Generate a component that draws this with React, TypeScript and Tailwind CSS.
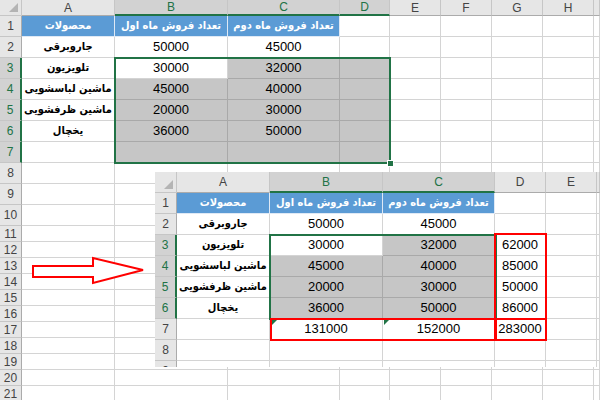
import clsx from "clsx";

type Cell = { text?: string; fa?: boolean; blue?: boolean; gray?: boolean };

const items = ["محصولات", "جاروبرقی", "تلویزیون", "ماشین لباسشویی", "ماشین ظرفشویی", "یخچال"];
const month1 = ["تعداد فروش ماه اول", "50000", "30000", "45000", "20000", "36000"];
const month2 = ["تعداد فروش ماه دوم", "45000", "32000", "40000", "30000", "50000"];
const sums = ["", "", "62000", "85000", "50000", "86000"];

const baseCell = (r: number, c: number): Cell => {
  if (r > 6 || c > 2) return {};
  const text = [items, month1, month2][c][r - 1];
  return { text, fa: c === 0 || r === 1, blue: r === 1 };
};

const topCell = (r: number, c: number): Cell => ({
  ...baseCell(r, c),
  gray: r >= 3 && r <= 7 && c >= 1 && c <= 3 && !(r === 3 && c === 1),
});

const pastedCell = (r: number, c: number): Cell => {
  if (c === 3 && r <= 6) return { text: sums[r - 1] };
  if (r === 7) return { text: ["", "131000", "152000", "283000"][c] };
  return { ...baseCell(r, c), gray: r >= 3 && r <= 6 && c >= 1 && c <= 2 && !(r === 3 && c === 1) };
};

const Corner = () => (
  <div className="relative bg-[#e6e6e6] border-r border-b border-[#c6c6c6]">
    <svg className="absolute right-[3px] bottom-[3px]" width="9" height="9" viewBox="0 0 9 9">
      <polygon points="9,0 9,9 0,9" fill="#b4b4b4" />
    </svg>
  </div>
);

const ColHead = ({ label, hi }: { label: string; hi: boolean }) => (
  <div
    className={clsx(
      "flex items-center justify-center border-r border-r-[#c6c6c6] text-[12px] font-['Liberation_Sans',Arial,sans-serif]",
      hi ? "bg-[#d2d2d2] text-[#217346] border-b-2 border-b-[#217346]" : "bg-[#e6e6e6] text-[#444] border-b border-b-[#ababab]"
    )}
  >
    {label}
  </div>
);

const RowHead = ({ n, hi }: { n: number; hi: boolean }) => (
  <div
    className={clsx(
      "flex items-center justify-center border-b border-b-[#c6c6c6] text-[12px] font-['Liberation_Sans',Arial,sans-serif]",
      hi ? "bg-[#d2d2d2] text-[#217346] border-r-2 border-r-[#217346]" : "bg-[#e6e6e6] text-[#444] border-r border-r-[#ababab]"
    )}
  >
    {n}
  </div>
);

const GridCell = ({ cell }: { cell: Cell }) => (
  <div
    dir={cell.fa ? "rtl" : undefined}
    className={clsx(
      "flex items-center justify-center whitespace-nowrap overflow-hidden border-r border-b",
      cell.blue
        ? "bg-[#5b9bd5] text-white border-[#dfe9f5]"
        : cell.gray
        ? "bg-[#c6c6c6] text-black border-[#a9a9a9]"
        : "bg-white text-black border-[#d4d4d4]",
      cell.fa
        ? "font-['DejaVu_Sans_Condensed','DejaVu_Sans',sans-serif] text-[11px] font-bold"
        : "font-['Liberation_Sans',Arial,sans-serif] text-[13px]"
    )}
  >
    {cell.text}
  </div>
);

type SheetProps = {
  gridClass: string;
  letters: string[];
  hiCols: number[];
  rows: number;
  hiRows: number[];
  cell: (r: number, c: number) => Cell;
};

const Sheet = ({ gridClass, letters, hiCols, rows, hiRows, cell }: SheetProps) => (
  <div className={clsx("grid", gridClass)}>
    <Corner />
    {letters.map((l, i) => (
      <ColHead key={i} label={l} hi={hiCols.includes(i)} />
    ))}
    {Array.from({ length: rows }, (_, i) => i + 1).map((r) => [
      <RowHead key={`h${r}`} n={r} hi={hiRows.includes(r)} />,
      ...letters.map((_, c) => <GridCell key={`${r}-${c}`} cell={cell(r, c)} />),
    ])}
  </div>
);

export default function App() {
  return (
    <div className="relative w-[600px] h-[400px] overflow-hidden bg-white">
      <Sheet
        gridClass="grid-cols-[22px_93px_113px_112px_50px_51px_51px_51px_51px_6px] grid-rows-[16px_repeat(10,21px)_repeat(11,16px)]"
        letters={["A", "B", "C", "D", "E", "F", "G", "H", ""]}
        hiCols={[1, 2, 3]}
        rows={21}
        hiRows={[3, 4, 5, 6, 7]}
        cell={topCell}
      />
      {/* selection B3:D7 */}
      <div className="absolute left-[114px] top-[57px] w-[277px] h-[107px] border-2 border-[#217346]" />
      <div className="absolute left-[387px] top-[160px] w-[7px] h-[7px] bg-[#217346] border border-white" />

      {/* arrow */}
      <svg className="absolute left-0 top-0" width="160" height="300" viewBox="0 0 160 300">
        <polygon
          points="33,266 93,266 93,258 143,270 93,283 93,277 33,277"
          fill="white"
          stroke="#ff0000"
          strokeWidth="2"
        />
      </svg>

      {/* pasted result */}
      <div className="absolute left-[155px] top-[172px] w-[445px] h-[195px] overflow-hidden">
        <Sheet
          gridClass="grid-cols-[22px_93px_113px_112px_51px_51px_3px] grid-rows-[21px_repeat(9,21px)]"
          letters={["A", "B", "C", "D", "E", ""]}
          hiCols={[1, 2]}
          rows={9}
          hiRows={[3, 4, 5, 6]}
          cell={pastedCell}
        />
        <div className="absolute left-[114px] top-[62px] w-[228px] h-[86px] border-2 border-[#217346]" />
        <div className="absolute left-[339px] top-[61px] w-[53px] h-[87px] border-2 border-[#ff0000]" />
        <div className="absolute left-[339px] top-[146px] w-[53px] h-[23px] border-2 border-[#ff0000]" />
        <div className="absolute left-[115px] top-[146px] w-[227px] h-[23px] border-2 border-[#ff0000]" />
        <div className="absolute left-[117px] top-[148px] w-0 h-0 border-t-[5px] border-t-[#217346] border-r-[5px] border-r-transparent" />
        <div className="absolute left-[229px] top-[148px] w-0 h-0 border-t-[5px] border-t-[#217346] border-r-[5px] border-r-transparent" />
      </div>
    </div>
  );
}
